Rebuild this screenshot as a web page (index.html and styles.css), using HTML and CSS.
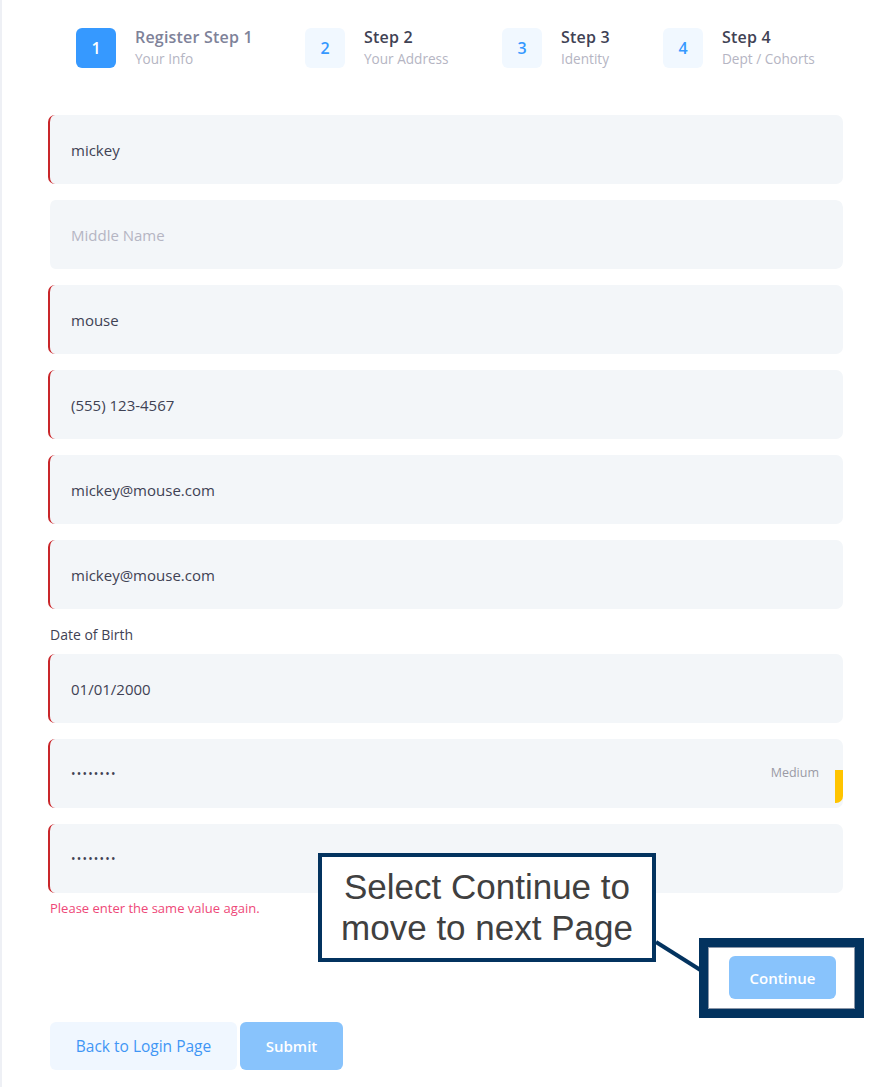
FILE: index.html
```html
<!DOCTYPE html>
<html lang="en">
<head>
<meta charset="utf-8">
<title>Register</title>
<link rel="stylesheet" href="styles.css">
</head>
<body>
<div class="page">
  <div class="stepper">
    <div class="step active">
      <div class="step-num">1</div>
      <div class="step-text">
        <div class="step-title">Register Step 1</div>
        <div class="step-sub">Your Info</div>
      </div>
    </div>
    <div class="step">
      <div class="step-num">2</div>
      <div class="step-text">
        <div class="step-title">Step 2</div>
        <div class="step-sub">Your Address</div>
      </div>
    </div>
    <div class="step">
      <div class="step-num">3</div>
      <div class="step-text">
        <div class="step-title">Step 3</div>
        <div class="step-sub">Identity</div>
      </div>
    </div>
    <div class="step">
      <div class="step-num">4</div>
      <div class="step-text">
        <div class="step-title">Step 4</div>
        <div class="step-sub">Dept / Cohorts</div>
      </div>
    </div>
  </div>

  <form class="form">
    <input class="field invalid" type="text" value="mickey">
    <input class="field" type="text" placeholder="Middle Name">
    <input class="field invalid" type="text" value="mouse">
    <input class="field invalid" type="text" value="(555) 123-4567">
    <input class="field invalid" type="text" value="mickey@mouse.com">
    <input class="field invalid" type="text" value="mickey@mouse.com">
    <label class="label">Date of Birth</label>
    <input class="field invalid" type="text" value="01/01/2000">
    <div class="pw-wrap">
      <input class="field invalid" type="password" value="12345678">
      <span class="strength">Medium</span>
      <span class="strength-bar"></span>
    </div>
    <input class="field invalid last" type="password" value="12345678">
    <div class="error">Please enter the same value again.</div>

    <div class="continue-row">
      <button type="button" class="btn btn-primary continue">Continue</button>
    </div>

    <div class="actions">
      <button type="button" class="btn btn-light">Back to Login Page</button>
      <button type="button" class="btn btn-primary submit">Submit</button>
    </div>
  </form>

  <div class="callout">Select Continue to<br>move to next Page</div>
  <svg class="connector" width="60" height="50" viewBox="0 0 60 50">
    <line x1="2" y1="3" x2="48" y2="32" stroke="#03335f" stroke-width="4"/>
  </svg>
  <div class="highlight"></div>
</div>
</body>
</html>
```

FILE: styles.css
```css
* { box-sizing: border-box; }

html, body {
  margin: 0;
  padding: 0;
  background: #ffffff;
}

body {
  font-family: "Open Sans", "Noto Sans", sans-serif;
  color: #3f4254;
}

.page {
  position: relative;
  min-height: 1087px;
  border-left: 2px solid #eef0f5;
  padding: 28px 34px 0 46px;
}

/* Stepper */
.stepper {
  display: grid;
  grid-template-columns: 229px 197px 161px auto;
  padding-left: 28px;
  height: 40px;
}

.step {
  display: flex;
  align-items: flex-start;
  gap: 20px;
}

.step-num {
  width: 40px;
  height: 40px;
  flex: none;
  border-radius: 6px;
  background: #f1f8ff;
  color: #3699ff;
  font-weight: 600;
  font-size: 16px;
  display: flex;
  align-items: center;
  justify-content: center;
}

.step.active .step-num {
  background: #3699ff;
  color: #ffffff;
}

.step-text {
  display: flex;
  flex-direction: column;
  margin-left: -1px;
}

.step-title {
  font-size: 16px;
  font-weight: 600;
  line-height: 18px;
  color: #3f4254;
  letter-spacing: 0.2px;
}

.step.active .step-title {
  color: #7e8299;
}

.step-sub {
  font-size: 13.6px;
  line-height: 18px;
  margin-top: 4px;
  color: #b5b5c3;
}

/* Form */
.form {
  display: flex;
  flex-direction: column;
  margin-top: 47px;
}

.field {
  display: block;
  width: 100%;
  height: 69px;
  margin: 0 0 16px 0;
  padding: 0 0 0 21px;
  border: none;
  border-left: 2px solid transparent;
  background: #f3f6f9;
  background-clip: padding-box;
  border-radius: 7px;
  font-family: inherit;
  font-size: 15px;
  color: #3f4254;
  outline: none;
}

.field::placeholder {
  color: #b5b5c3;
}

.field.invalid {
  border-left-color: #c9262a;
  background-clip: border-box;
}

.field.last {
  margin-bottom: 0;
}

.field[type="password"] {
  font-size: 12px;
  letter-spacing: 1.2px;
}

.label {
  font-size: 14px;
  line-height: 20px;
  margin-bottom: 9px;
  padding-left: 2px;
  color: #3f4254;
}

.pw-wrap {
  position: relative;
}

.strength {
  position: absolute;
  right: 24px;
  top: 25px;
  font-size: 12.5px;
  color: #9a9aa5;
}

.strength-bar {
  position: absolute;
  right: 0;
  top: 31px;
  width: 8px;
  height: 33px;
  background: #ffc400;
  border-bottom-right-radius: 7px;
}

.error {
  margin-top: 6px;
  padding-left: 2px;
  font-size: 13px;
  line-height: 18px;
  color: #ee4878;
}

.continue-row {
  display: flex;
  justify-content: flex-end;
  padding-right: 7px;
  margin-top: 39px;
}

.btn {
  border: none;
  border-radius: 6px;
  font-family: inherit;
  font-size: 15px;
  font-weight: 600;
  cursor: pointer;
  padding: 0;
}

.btn-primary {
  background: #88c3fc;
  color: #ffffff;
}

.btn-light {
  background: #f0f7ff;
  color: #3f96f5;
  font-weight: 500;
  font-size: 15.5px;
  width: 187px;
  height: 48px;
}

.continue {
  width: 107px;
  height: 43px;
}

.actions {
  display: flex;
  gap: 3px;
  margin-top: 23px;
  padding-left: 2px;
}

.submit {
  width: 103px;
  height: 48px;
}

/* Annotation overlays */
.callout {
  position: absolute;
  left: 316px;
  top: 853px;
  width: 338px;
  height: 109px;
  border: 4px solid #03335f;
  background: #ffffff;
  font-family: "Liberation Sans", Arial, sans-serif;
  font-size: 35px;
  line-height: 41px;
  color: #404040;
  text-align: center;
  padding-top: 9px;
}

.connector {
  position: absolute;
  left: 652px;
  top: 939px;
}

.highlight {
  position: absolute;
  left: 697px;
  top: 938px;
  width: 165px;
  height: 80px;
  border: 9px solid #03335f;
  box-shadow: inset 0 0 0 1px #8a96a8;
}
```
